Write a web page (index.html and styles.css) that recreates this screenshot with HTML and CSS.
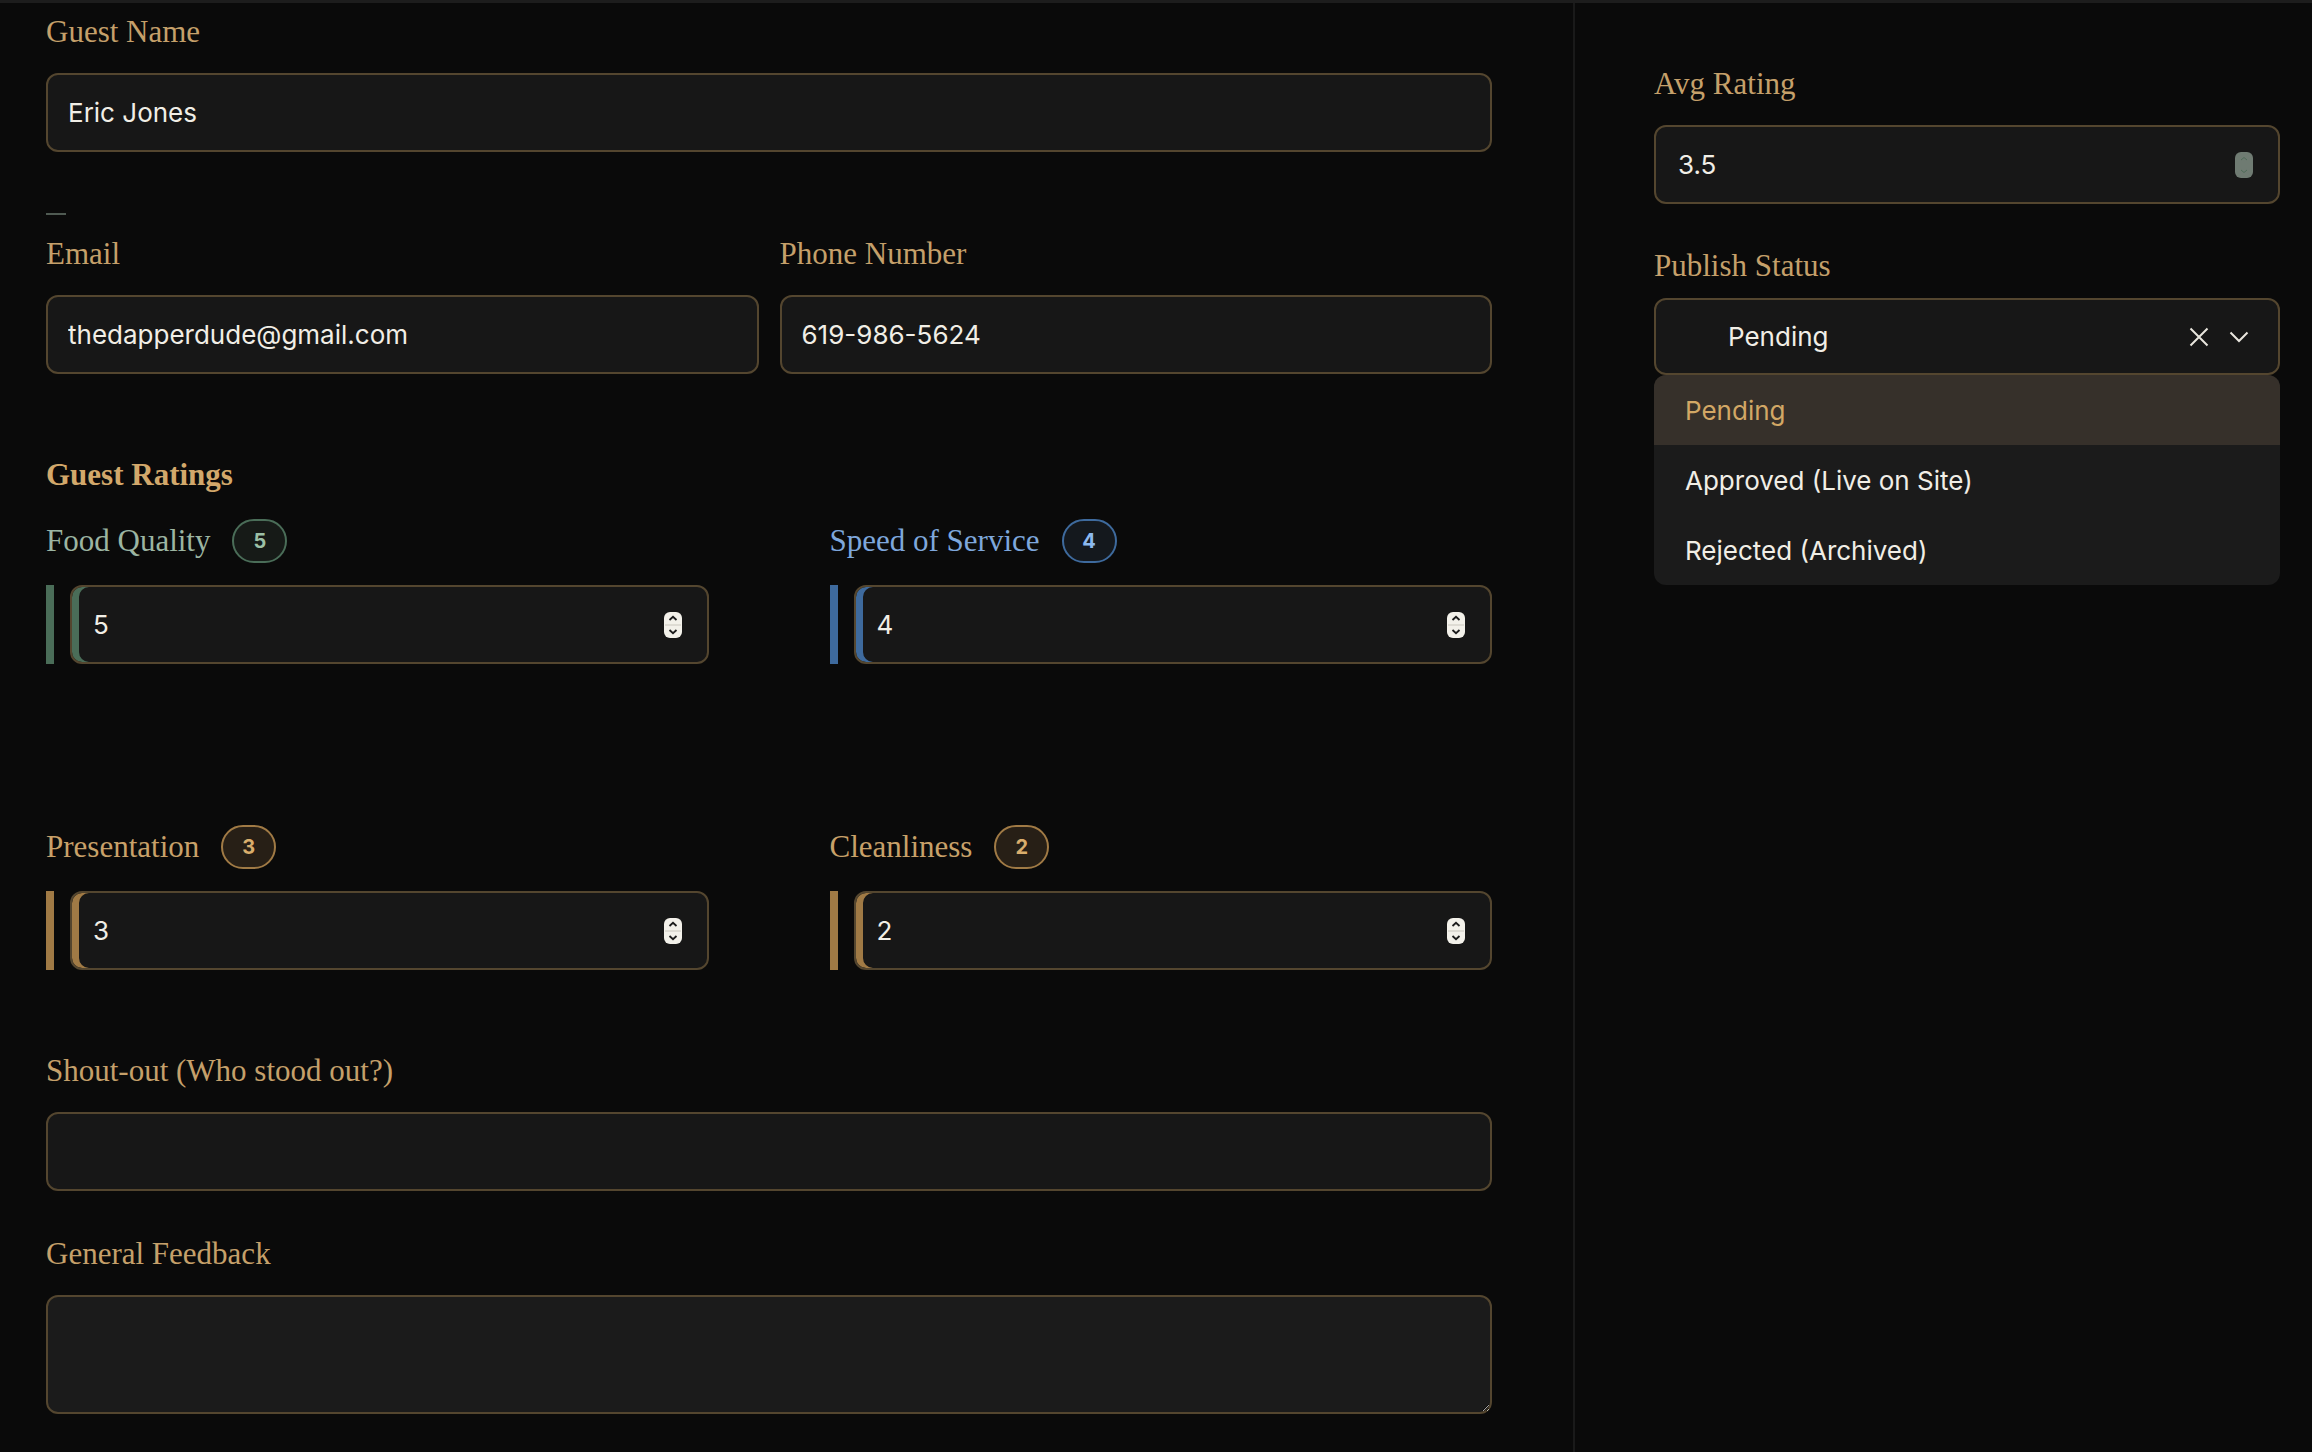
FILE: index.html
```html
<!DOCTYPE html>
<html lang="en">
<head>
    <meta charset="UTF-8">
    <meta name="viewport" content="width=device-width, initial-scale=1.0">
    <title>Guest Feedback</title>
    <link rel="stylesheet" href="styles.css">
</head>
<body>
    <div class="page">
        <main class="main">
            <div class="field-group">
                <label class="label" for="guestName">Guest Name</label>
                <div class="field">
                    <input type="text" id="guestName" value="Eric Jones">
                </div>
            </div>

            <div class="dash"></div>

            <div class="two-col">
                <div class="field-group">
                    <label class="label" for="email">Email</label>
                    <div class="field">
                        <input type="text" id="email" value="thedapperdude@gmail.com">
                    </div>
                </div>
                <div class="field-group">
                    <label class="label" for="phone">Phone Number</label>
                    <div class="field">
                        <input type="text" id="phone" value="619-986-5624">
                    </div>
                </div>
            </div>

            <h3 class="section-title">Guest Ratings</h3>

            <div class="ratings">
                <div class="rating green">
                    <div class="rating-head">
                        <label class="rating-label" for="food">Food Quality</label>
                        <span class="badge">5</span>
                    </div>
                    <div class="rating-body">
                        <span class="bar"></span>
                        <div class="field field-rating">
                            <input type="text" id="food" value="5" inputmode="numeric">
                            <svg class="spinner" width="18" height="26" viewBox="0 0 18 26"><rect x="0" y="0" width="18" height="26" rx="6" fill="#f3f1ea"/><line x1="1" y1="13" x2="17" y2="13" stroke="#c9c6bd" stroke-width="1"/><path d="M5.5 8 L9 4.8 L12.5 8" fill="none" stroke="#1c1c1c" stroke-width="1.8"/><path d="M5.5 18 L9 21.2 L12.5 18" fill="none" stroke="#1c1c1c" stroke-width="1.8"/></svg>
                        </div>
                    </div>
                </div>

                <div class="rating blue">
                    <div class="rating-head">
                        <label class="rating-label" for="speed">Speed of Service</label>
                        <span class="badge">4</span>
                    </div>
                    <div class="rating-body">
                        <span class="bar"></span>
                        <div class="field field-rating">
                            <input type="text" id="speed" value="4" inputmode="numeric">
                            <svg class="spinner" width="18" height="26" viewBox="0 0 18 26"><rect x="0" y="0" width="18" height="26" rx="6" fill="#f3f1ea"/><line x1="1" y1="13" x2="17" y2="13" stroke="#c9c6bd" stroke-width="1"/><path d="M5.5 8 L9 4.8 L12.5 8" fill="none" stroke="#1c1c1c" stroke-width="1.8"/><path d="M5.5 18 L9 21.2 L12.5 18" fill="none" stroke="#1c1c1c" stroke-width="1.8"/></svg>
                        </div>
                    </div>
                </div>

                <div class="rating gold">
                    <div class="rating-head">
                        <label class="rating-label" for="presentation">Presentation</label>
                        <span class="badge">3</span>
                    </div>
                    <div class="rating-body">
                        <span class="bar"></span>
                        <div class="field field-rating">
                            <input type="text" id="presentation" value="3" inputmode="numeric">
                            <svg class="spinner" width="18" height="26" viewBox="0 0 18 26"><rect x="0" y="0" width="18" height="26" rx="6" fill="#f3f1ea"/><line x1="1" y1="13" x2="17" y2="13" stroke="#c9c6bd" stroke-width="1"/><path d="M5.5 8 L9 4.8 L12.5 8" fill="none" stroke="#1c1c1c" stroke-width="1.8"/><path d="M5.5 18 L9 21.2 L12.5 18" fill="none" stroke="#1c1c1c" stroke-width="1.8"/></svg>
                        </div>
                    </div>
                </div>

                <div class="rating gold">
                    <div class="rating-head">
                        <label class="rating-label" for="cleanliness">Cleanliness</label>
                        <span class="badge">2</span>
                    </div>
                    <div class="rating-body">
                        <span class="bar"></span>
                        <div class="field field-rating">
                            <input type="text" id="cleanliness" value="2" inputmode="numeric">
                            <svg class="spinner" width="18" height="26" viewBox="0 0 18 26"><rect x="0" y="0" width="18" height="26" rx="6" fill="#f3f1ea"/><line x1="1" y1="13" x2="17" y2="13" stroke="#c9c6bd" stroke-width="1"/><path d="M5.5 8 L9 4.8 L12.5 8" fill="none" stroke="#1c1c1c" stroke-width="1.8"/><path d="M5.5 18 L9 21.2 L12.5 18" fill="none" stroke="#1c1c1c" stroke-width="1.8"/></svg>
                        </div>
                    </div>
                </div>
            </div>

            <div class="field-group shoutout">
                <label class="label" for="shoutout">Shout-out (Who stood out?)</label>
                <div class="field">
                    <input type="text" id="shoutout" value="">
                </div>
            </div>

            <div class="field-group feedback">
                <label class="label" for="feedback">General Feedback</label>
                <textarea id="feedback" class="textarea"></textarea>
            </div>
        </main>

        <aside class="aside">
            <div class="field-group">
                <label class="label" for="avgRating">Avg Rating</label>
                <div class="field field-avg">
                    <input type="text" id="avgRating" value="3.5" readonly>
                    <svg class="spinner" width="18" height="26" viewBox="0 0 18 26"><rect x="0" y="0" width="18" height="26" rx="6" fill="#6f7b72"/><path d="M6 8 L9 5.5 L12 8" fill="none" stroke="#4f6b58" stroke-width="1"/><path d="M6 18 L9 20.5 L12 18" fill="none" stroke="#4f6b58" stroke-width="1"/></svg>
                </div>
            </div>

            <div class="field-group status">
                <label class="label" for="status">Publish Status</label>
                <div class="select-wrap">
                    <div class="field field-select">
                        <span class="select-value" id="status">Pending</span>
                        <svg class="clear" width="20" height="20" viewBox="0 0 20 20"><path d="M1.5 1.5 L18.5 18.5 M18.5 1.5 L1.5 18.5" stroke="#e9e6de" stroke-width="2" fill="none"/></svg>
                        <svg class="chevron" width="20" height="12" viewBox="0 0 20 12"><path d="M1.5 1.5 L10 10 L18.5 1.5" stroke="#e9e6de" stroke-width="2" fill="none"/></svg>
                    </div>
                    <ul class="menu">
                        <li class="menu-item active">Pending</li>
                        <li class="menu-item">Approved (Live on Site)</li>
                        <li class="menu-item">Rejected (Archived)</li>
                    </ul>
                </div>
            </div>
        </aside>
    </div>
</body>
</html>
```

FILE: styles.css
```css
body {
    margin: 0;
    background-color: #0a0a0a;
    color: #f1eee6;
    font-family: "Inter", "Liberation Sans", sans-serif;
}

.page {
    display: flex;
    min-height: 1449px;
    border-top: 3px solid #1d1d1d;
}

.main {
    width: 1573px;
    box-sizing: border-box;
    padding: 11px 81px 0 46px;
}

.aside {
    flex: 1;
    border-left: 2px solid #1a1a1a;
    padding: 63px 32px 0 79px;
}

.label {
    display: block;
    font-family: "Liberation Serif", serif;
    font-size: 31px;
    line-height: 36px;
    color: #c5a06a;
    margin-bottom: 23px;
}

.field {
    display: flex;
    align-items: center;
    height: 79px;
    box-sizing: border-box;
    border: 2px solid #54462f;
    border-radius: 12px;
    background-color: #171717;
    padding: 0 25px 0 20px;
}

.field input {
    flex: 1;
    min-width: 0;
    background: transparent;
    border: none;
    outline: none;
    padding: 0;
    color: #f1eee6;
    font-family: "Inter", "Liberation Sans", sans-serif;
    font-size: 26px;
}

.spinner {
    flex-shrink: 0;
}

.dash {
    width: 20px;
    height: 2px;
    background-color: #4f5a52;
    margin: 61px 0 21px;
}

.two-col {
    display: grid;
    grid-template-columns: 1fr 1fr;
    column-gap: 21px;
}

.section-title {
    margin: 83px 0 26px;
    font-family: "Liberation Serif", serif;
    font-size: 31px;
    line-height: 36px;
    font-weight: bold;
    color: #d2a86b;
}

.ratings {
    display: grid;
    grid-template-columns: 1fr 1fr;
    column-gap: 121px;
    row-gap: 161px;
}

.rating-head {
    display: flex;
    align-items: center;
    height: 43px;
    margin-bottom: 23px;
}

.rating-label {
    font-family: "Liberation Serif", serif;
    font-size: 31px;
    line-height: 36px;
}

.badge {
    display: flex;
    align-items: center;
    justify-content: center;
    width: 55px;
    height: 44px;
    box-sizing: border-box;
    margin-left: 22px;
    border: 2px solid;
    border-radius: 22px;
    font-size: 20px;
    font-weight: bold;
}

.rating-body {
    display: flex;
}

.bar {
    width: 8px;
    height: 79px;
    margin-right: 16px;
    flex-shrink: 0;
}

.field-rating {
    flex: 1;
    padding-left: 21px;
}

.green .rating-label { color: #9cb5a2; }
.green .badge { border-color: #4a6d58; background-color: #161a17; color: #9cc0a6; }
.green .bar { background-color: #4a6d58; }
.green .field-rating { box-shadow: inset 7px 0 0 #4a6d58; }

.blue .rating-label { color: #7ea7dc; }
.blue .badge { border-color: #3e6a9d; background-color: #14181d; color: #8cb8ee; }
.blue .bar { background-color: #3e6a9d; }
.blue .field-rating { box-shadow: inset 7px 0 0 #3e6a9d; }

.gold .rating-label { color: #c8a169; }
.gold .badge { border-color: #a07a45; background-color: #271f16; color: #d9ad6c; }
.gold .bar { background-color: #a07a45; }
.gold .field-rating { box-shadow: inset 7px 0 0 #a07a45; }

.shoutout {
    margin-top: 83px;
}

.feedback {
    margin-top: 45px;
}

.textarea {
    display: block;
    width: 100%;
    height: 119px;
    box-sizing: border-box;
    border: 2px solid #54462f;
    border-radius: 12px;
    background-color: #1b1b1b;
    color: #f1eee6;
    font-family: "Inter", "Liberation Sans", sans-serif;
    font-size: 26px;
    padding: 16px 20px;
    outline: none;
    resize: vertical;
    color-scheme: dark;
}

.field-avg {
    padding-left: 22px;
}

.status {
    margin-top: 44px;
}

.status .label {
    margin-bottom: 14px;
}

.select-wrap {
    position: relative;
}

.field-select {
    height: 77px;
    padding: 0 29px 0 72px;
}

.select-value {
    flex: 1;
    font-size: 26px;
    color: #f1eee6;
}

.clear {
    margin-right: 20px;
}

.menu {
    position: absolute;
    top: 100%;
    left: 0;
    right: 0;
    margin: 0;
    padding: 0;
    list-style: none;
    background-color: #1b1b1b;
    border-radius: 12px;
    overflow: hidden;
}

.menu-item {
    display: flex;
    align-items: center;
    height: 70px;
    padding-left: 31px;
    font-size: 26px;
    color: #f1eee6;
}

.menu-item.active {
    background-color: #36302a;
    color: #d2a765;
}
```
